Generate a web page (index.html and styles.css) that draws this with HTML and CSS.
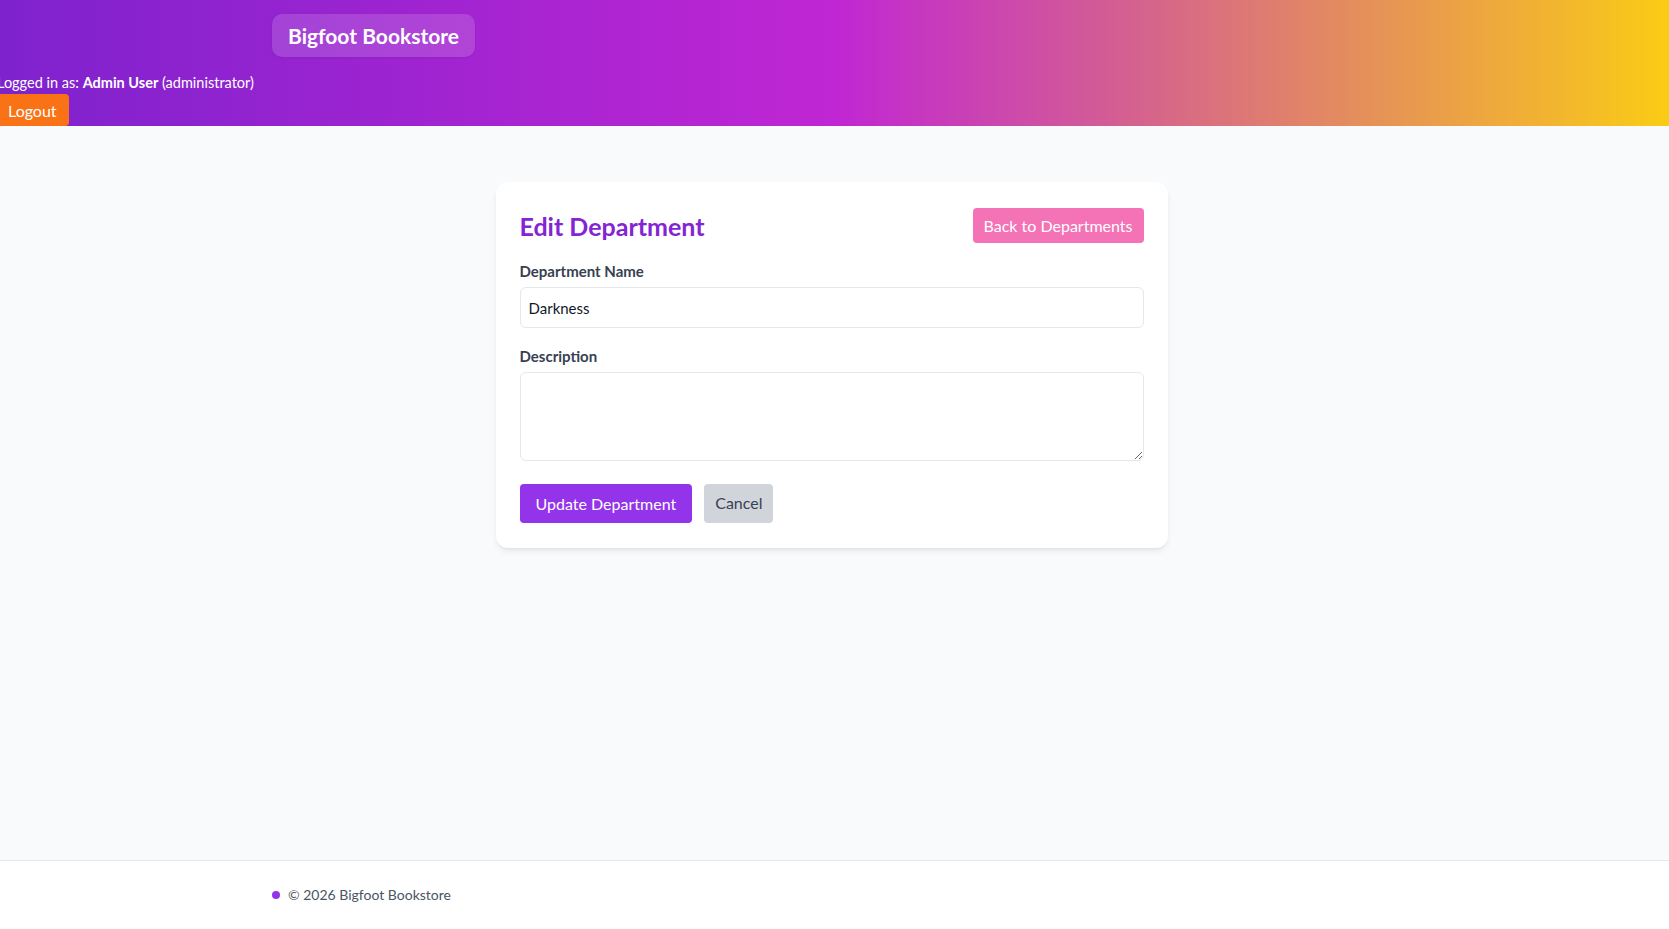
FILE: index.html
```html
<!DOCTYPE html>
<html lang="en">
<head>
    <meta charset="UTF-8">
    <title>Edit Department - Bigfoot Bookstore</title>
    <link rel="stylesheet" href="styles.css">
</head>
<body>
    <div class="page">
        <header class="site-header">
            <div class="container">
                <a class="brand" href="#">Bigfoot Bookstore</a>
            </div>
            <div class="user-info">
                <div class="user-line">Logged in as: <strong>Admin User</strong> (administrator)</div>
                <button class="btn-logout" type="button">Logout</button>
            </div>
        </header>

        <main class="main">
            <div class="card">
                <div class="card-head">
                    <h1 class="card-title">Edit Department</h1>
                    <a class="btn btn-back" href="#">Back to Departments</a>
                </div>
                <form class="form">
                    <div class="form-group">
                        <label class="form-label" for="name">Department Name</label>
                        <input class="form-input" id="name" type="text" value="Darkness">
                    </div>
                    <div class="form-group">
                        <label class="form-label" for="desc">Description</label>
                        <textarea class="form-input form-textarea" id="desc"></textarea>
                    </div>
                    <div class="form-actions">
                        <button class="btn btn-primary" type="submit">Update Department</button>
                        <a class="btn btn-cancel" href="#">Cancel</a>
                    </div>
                </form>
            </div>
        </main>

        <footer class="site-footer">
            <div class="container footer-inner">
                <span class="footer-dot"></span>
                <span>&copy; 2026 Bigfoot Bookstore</span>
            </div>
        </footer>
    </div>
</body>
</html>
```

FILE: styles.css
```css
*{
    margin:0;
    padding:0;
    box-sizing:border-box;
}
body{
    font-family:Lato, "Open Sans", "Liberation Sans", sans-serif;
    background-color:#f9fafb;
    color:#1f2937;
}
a{
    text-decoration:none;
}
.page{
    min-height:100vh;
    display:flex;
    flex-direction:column;
}
.container{
    max-width:1125px;
    margin:0 auto;
    width:100%;
}

/* header */
.site-header{
    height:126px;
    padding-top:14px;
    background:linear-gradient(90deg,#7e22ce 0%,#c026d3 50%,#facc15 100%);
    overflow:hidden;
}
.brand{
    display:inline-block;
    padding:9px 16px;
    border-radius:10px;
    background-color:rgba(255,255,255,0.15);
    box-shadow:0 1px 3px rgba(0,0,0,0.08);
    color:#fff;
    font-size:21px;
    font-weight:700;
    line-height:25px;
}
.user-info{
    margin-top:16px;
    margin-left:-3px;
    color:#fff;
    font-size:14.5px;
}
.user-line{
    line-height:20px;
}
.btn-logout{
    margin-top:1px;
    margin-left:-1px;
    height:32px;
    padding:0 12px;
    border:none;
    border-radius:4px;
    background-color:#f97316;
    color:#fff;
    font-family:inherit;
    font-size:16px;
    cursor:pointer;
}

/* main */
.main{
    flex:1;
    padding:56px 19px 40px 13px;
}
.card{
    width:672px;
    margin:0 auto;
    padding:26px 24px 25px;
    background-color:#fff;
    border-radius:12px;
    box-shadow:0 4px 6px -1px rgba(0,0,0,0.08),0 2px 4px -2px rgba(0,0,0,0.06);
}
.card-head{
    display:flex;
    justify-content:space-between;
    align-items:center;
    margin-bottom:17px;
}
.card-title{
    font-size:25px;
    font-weight:700;
    color:#8424d4;
}
.btn{
    display:inline-flex;
    align-items:center;
    justify-content:center;
    border:none;
    border-radius:4px;
    font-family:inherit;
    cursor:pointer;
}
.btn-back{
    height:35px;
    padding:0 11px;
    background-color:#f472b6;
    color:#fff;
    font-size:16px;
}
.form-group{
    margin-bottom:17px;
}
.form-label{
    display:block;
    margin-bottom:5px;
    font-size:15px;
    font-weight:700;
    line-height:22px;
    color:#374151;
}
.form-input{
    display:block;
    width:100%;
    height:41px;
    padding:0 8px;
    border:1px solid #e5e7eb;
    border-radius:6px;
    font-family:inherit;
    font-size:15px;
    color:#111827;
    background-color:#fff;
}
.form-textarea{
    height:89px;
    padding:8px;
    resize:vertical;
}
.form-actions{
    display:flex;
    gap:12px;
    padding-top:6px;
}
.btn-primary{
    height:39px;
    padding:0 16px;
    background-color:#9333ea;
    color:#fff;
    font-size:16px;
}
.btn-cancel{
    height:39px;
    padding:0 11px 3px;
    background-color:#d1d5db;
    color:#374151;
    font-size:16px;
}

/* footer */
.site-footer{
    background-color:#fff;
    border-top:1px solid #e5e7eb;
    padding:24px 0;
}
.footer-inner{
    display:flex;
    align-items:center;
    gap:8px;
    font-size:14px;
    line-height:20px;
    color:#4b5563;
}
.footer-dot{
    width:8px;
    height:8px;
    border-radius:50%;
    background-color:#9333ea;
}
```
